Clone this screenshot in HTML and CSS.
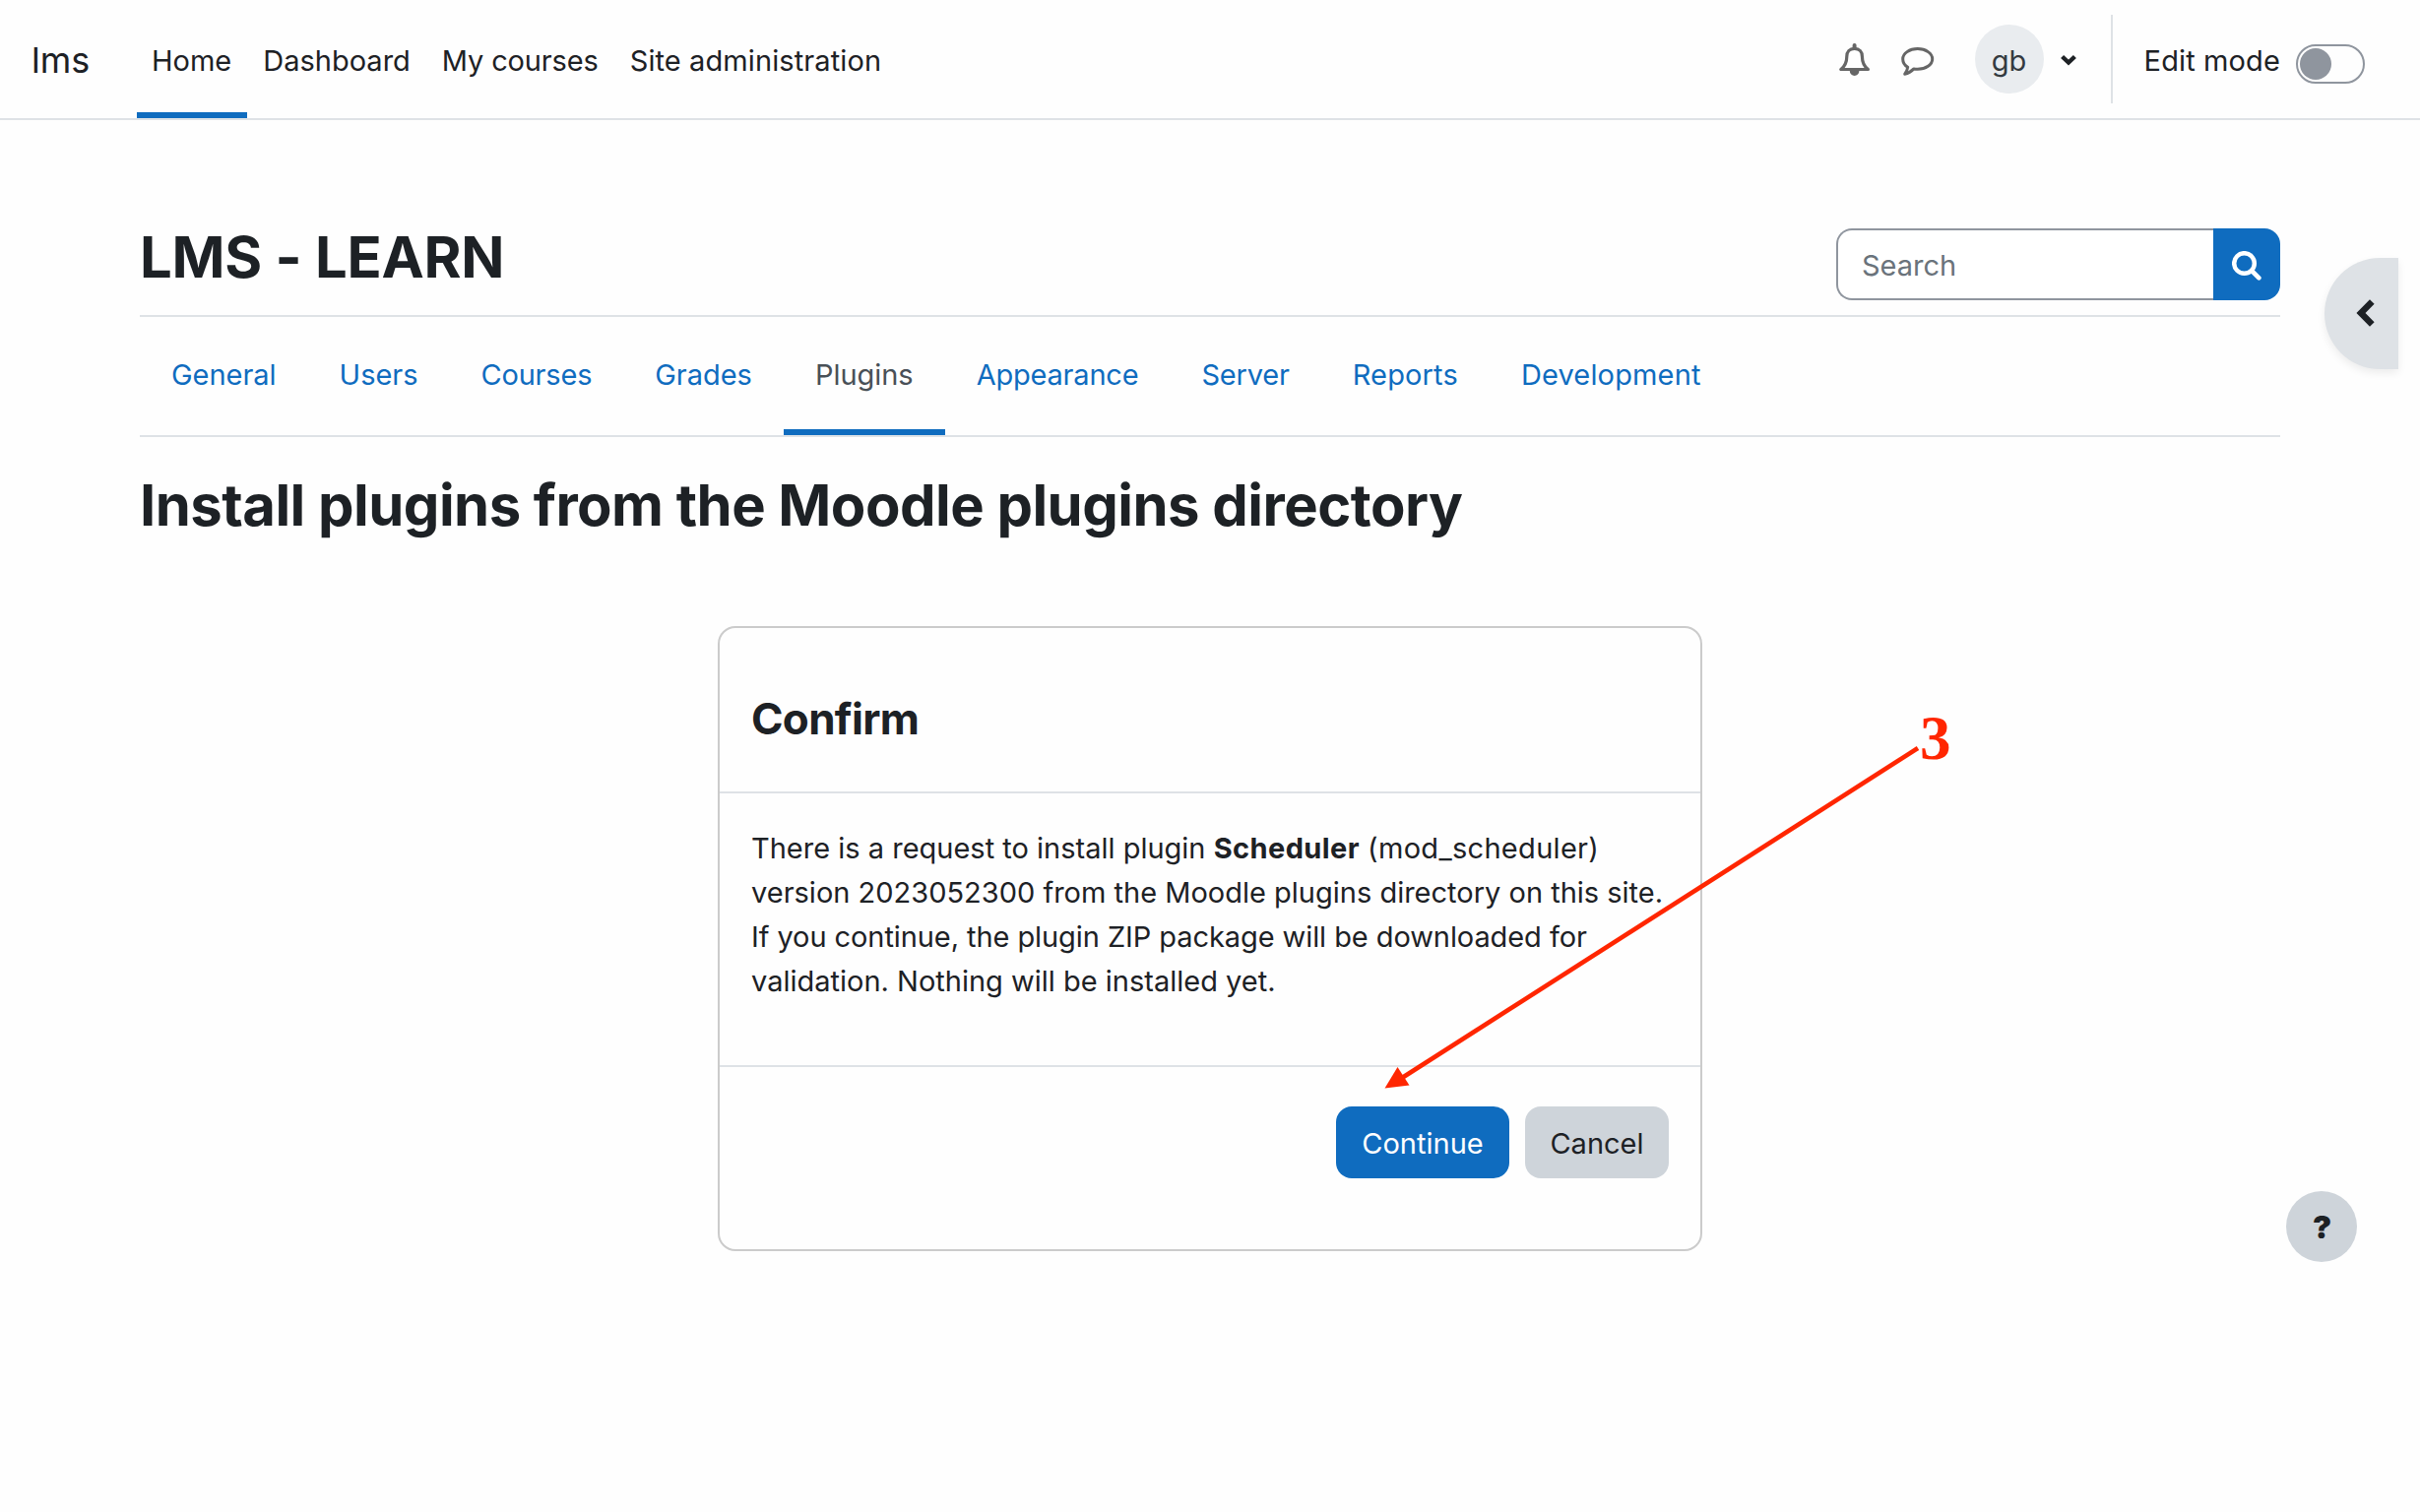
FILE: index.html
```
<!DOCTYPE html>
<html lang="en">
<head>
<meta charset="utf-8">
<title>LMS - LEARN</title>
<link rel="stylesheet" href="styles.css">
</head>
<body>
<header class="navbar">
  <a class="brand">lms</a>
  <nav class="primary-nav">
    <a class="nav-item active">Home</a>
    <a class="nav-item">Dashboard</a>
    <a class="nav-item nav-courses">My courses</a>
    <a class="nav-item nav-admin">Site administration</a>
  </nav>
  <div class="user-nav">
    <svg class="icon-bell" width="36" height="38" viewBox="0 0 36 38"><path d="M17.600 8.300c-5 0-7.800 3.400-7.800 8 0 7.500-2.500 10.500-6 13.200h27.600c-3.500-2.700-6-5.700-6-13.200 0-4.600-2.800-8-7.800-8z" fill="none" stroke="#666" stroke-width="3.200" stroke-linejoin="round"/><path d="M15.600 8V5a2 2 0 0 1 4 0v3zM12.800 31h9.600a4.800 5 0 0 1-9.600 0z" fill="#666"/></svg>
    <svg class="icon-chat" width="36" height="38" viewBox="0 0 36 38"><path d="M17.700 8.600c8.300 0 15 4.600 15 10.300s-6.700 10.300-15 10.300c-1.400 0-2.600-.1-3.800-.3-2.600 2.700-5.800 4.600-9.200 5.300 1.700-2 2.700-4.200 3-7C4.600 25.300 2.700 22.300 2.700 18.900c0-5.700 6.700-10.300 15-10.300z" fill="none" stroke="#666" stroke-width="3" stroke-linejoin="round"/></svg>
    <span class="avatar">gb</span>
    <svg class="icon-caret" width="18" height="14" viewBox="0 0 18 14"><path d="M2.600 3.500L9 9.500l6.400-6" fill="none" stroke="#1d2125" stroke-width="4.400"/></svg>
    <div class="edit-mode">
      <span class="edit-label">Edit mode</span>
      <span class="switch"><span class="knob"></span></span>
    </div>
  </div>
</header>

<main class="page">
  <div class="page-header">
    <h1>LMS - LEARN</h1>
    <form class="search">
      <span class="search-field">Search</span>
      <span class="search-button"><svg width="30" height="30" viewBox="0 0 30 30"><circle cx="12.500" cy="12.500" r="10.300" fill="none" stroke="#fff" stroke-width="4.500"/><path d="M20 20l7.400 7.300" stroke="#fff" stroke-width="4.600" stroke-linecap="round"/></svg></span>
    </form>
  </div>
  <nav class="tabs">
    <a class="tab">General</a>
    <a class="tab">Users</a>
    <a class="tab tab-tight">Courses</a>
    <a class="tab">Grades</a>
    <a class="tab active">Plugins</a>
    <a class="tab tab-tight">Appearance</a>
    <a class="tab tab-tight">Server</a>
    <a class="tab tab-wide">Reports</a>
    <a class="tab tab-wide">Development</a>
  </nav>
  <h2>Install plugins from the Moodle plugins directory</h2>
  <section class="card">
    <div class="card-header"><h3>Confirm</h3></div>
    <p class="card-body">
      <span class="line">There is a request to install plugin <b>Scheduler</b> <span class="component">(mod_scheduler)</span></span>
      <span class="line">version 2023052300 from the Moodle plugins directory on this site.</span>
      <span class="line line-tight">If you continue, the plugin ZIP package will be downloaded for</span>
      <span class="line">validation. Nothing will be installed yet.</span>
    </p>
    <div class="card-footer">
      <a class="btn btn-primary">Continue</a>
      <a class="btn btn-secondary">Cancel</a>
    </div>
  </section>
</main>

<div class="drawer-toggle"><svg width="22" height="34" viewBox="0 0 22 34"><path d="M17.300 5.500L6 17l11.300 11.500" fill="none" stroke="#1d2125" stroke-width="6.500"/></svg></div>
<div class="help">?</div>

<svg class="arrow" width="560" height="360" viewBox="0 0 560 360"><path d="M548 10L24 345" stroke="#ff2600" stroke-width="4.600"/><path d="M6.500 355.500l13-21.500 12 18.500z" fill="#ff2600"/></svg>
<span class="step">3</span>
</body>
</html>
```
FILE: styles.css
```
* { box-sizing: border-box; }
body {
  margin: 0;
  position: relative;
  width: 2458px;
  height: 1536px;
  overflow: hidden;
  background: #fefefe;
  color: #1d2125;
  font: 400 29px/45px Inter, "Liberation Sans", sans-serif;
}
h1, h2, h3, p { margin: 0; }

.navbar {
  display: flex;
  height: 122px;
  padding-left: 32px;
  border-bottom: 2px solid #dee2e6;
}
.brand {
  width: 107px;
  font-size: 36px;
  line-height: 122px;
}
.primary-nav { display: flex; }
.nav-item {
  padding: 0 16px;
  line-height: 124px;
  height: 120px;
}
.nav-item.active { padding-left: 15px; box-shadow: inset 0 -6px #0f6cbf; }
.nav-courses { letter-spacing: -.15px; }
.nav-admin { letter-spacing: .1px; }

.user-nav { display: flex; align-items: center; margin-left: auto; }
.icon-bell { margin-right: 28px; }
.icon-chat { margin-right: 40px; }
.avatar {
  width: 70px;
  height: 70px;
  border-radius: 50%;
  background: #e9ecef;
  color: #343a40;
  text-align: center;
  line-height: 73px;
}
.icon-caret { margin: 2px 34px 0 16px; }
.edit-mode {
  display: flex;
  align-items: center;
  height: 90px;
  padding: 0 56px 0 32px;
  border-left: 2px solid #dee2e6;
}
.edit-label { padding-top: 3px; line-height: 90px; margin-right: 16px; letter-spacing: .12px; }
.switch {
  width: 70px;
  height: 40px;
  margin-top: 10px;
  padding: 2px;
  border: 2px solid #8f959e;
  border-radius: 20px;
}
.knob {
  display: block;
  width: 32px;
  height: 32px;
  border-radius: 50%;
  background: #8f959e;
}

.page { padding: 110px 142px 0; }
.page-header {
  display: flex;
  justify-content: space-between;
  height: 90px;
  border-bottom: 2px solid #dee2e6;
}
h1 { font-size: 58px; line-height: 58px; letter-spacing: -.25px; }
.search { display: flex; width: 451px; height: 73px; }
.search-field {
  flex: 1;
  padding-left: 24px;
  border: 2px solid #8f959e;
  border-right: 0;
  border-radius: 16px 0 0 16px;
  background: #fff;
  color: #6a737b;
  line-height: 72px;
}
.search-button {
  display: flex;
  align-items: center;
  justify-content: center;
  width: 68px;
  padding-top: 3px;
  border-radius: 0 16px 16px 0;
  background: #0f6cbf;
}

.tabs {
  display: flex;
  height: 122px;
  border-bottom: 2px solid #dee2e6;
}
.tab {
  padding: 3px 32px 0;
  border-bottom: 6px solid transparent;
  line-height: 111px;
  color: #0f6cbf;
  letter-spacing: -.03px;
}
.tab.active { border-color: #0f6cbf; color: #495057; }
.tab-tight { letter-spacing: -.2px; }
.tab-wide { letter-spacing: .15px; }

h2 {
  margin: 33px 0 87px;
  font-size: 58px;
  line-height: 72px;
  letter-spacing: -.53px;
}

.card {
  width: 1000px;
  height: 635px;
  margin: 0 auto;
  border: 2px solid #cbcbcb;
  border-radius: 18px;
}
.card-header {
  height: 168px;
  padding: 65px 32px 0;
  border-bottom: 2px solid #dee2e6;
}
h3 { font-size: 44px; line-height: 54px; letter-spacing: -.7px; }
.card-body { height: 276px; padding: 33px 32px 0; }
.line { display: block; white-space: nowrap; }
.line-tight { letter-spacing: -.08px; }
.line b { letter-spacing: .4px; }
.component { letter-spacing: .3px; }
.card-footer {
  display: flex;
  justify-content: flex-end;
  gap: 16px;
  padding: 40px 32px 0;
  border-top: 2px solid #dee2e6;
}
.btn {
  height: 73px;
  border-radius: 16px;
  line-height: 75px;
  text-align: center;
}
.btn-primary { width: 176px; background: #0f6cbf; color: #fff; }
.btn-secondary { width: 146px; background: #ced4da; }

/* Controls floating over the page */
.drawer-toggle {
  position: absolute;
  left: 2361px;
  top: 262px;
  display: flex;
  align-items: center;
  width: 75px;
  height: 113px;
  padding: 0 0 2px 31px;
  border-radius: 56.5px 0 0 56.5px;
  background: #dee2e6;
  box-shadow: 0 4px 8px rgba(0, 0, 0, .075);
}
.help {
  position: absolute;
  left: 2322px;
  top: 1210px;
  width: 72px;
  height: 72px;
  padding-left: 1px;
  border-radius: 50%;
  background: #ced4da;
  text-align: center;
  font-size: 32px;
  font-weight: 900;
  line-height: 73px;
}
.arrow { position: absolute; left: 1400px; top: 750px; }
.step {
  position: absolute;
  left: 1950px;
  top: 714px;
  color: #ff2600;
  font: 700 63px/72px "Liberation Serif", serif;
}
```
